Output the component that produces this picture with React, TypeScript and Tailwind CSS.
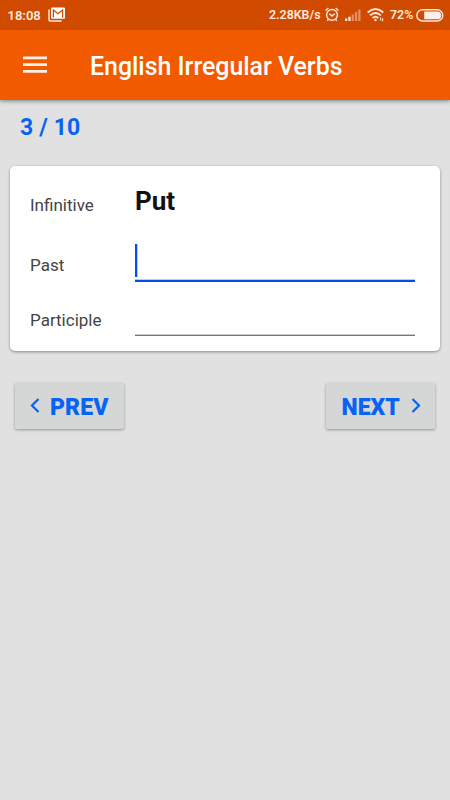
import type { ReactNode } from 'react';

function MailIcon() {
  return (
    <svg width="18" height="16" viewBox="0 0 18 16" fill="none">
      <path d="M1 2.5v10.3q0 1.2 1.2 1.2h11.4" stroke="#ffe9df" strokeWidth="1.5" />
      <rect x="3" y="0.5" width="14" height="11.2" rx="1" fill="#fff" />
      <path d="M5.4 10.5V3L10 6.8 14.6 3v7.5" stroke="#d04a00" strokeWidth="1.2" />
    </svg>
  );
}

function AlarmIcon() {
  return (
    <svg width="14" height="16" viewBox="0 0 14 16" fill="none" stroke="#ffe9df" strokeWidth="1.4">
      <circle cx="7" cy="7.9" r="5.4" />
      <path d="M4.5 6.8 7 9l2.8-2.2M.6 3.5 3.4 1M13.4 3.5 10.6 1M3.4 12.4l-1.2 1.4M10.6 12.4l1.2 1.4" />
    </svg>
  );
}

function SignalIcon() {
  return (
    <svg width="16" height="13" viewBox="0 0 16 13" fill="#ffe9df">
      <path d="M0 9.5h2.2V12H0zM3.3 7.8h2.3V12H3.3z" />
      <path opacity=".45" d="M6.7 5.5h2.2V12H6.7zM10 3h2.2v9H10zM13.3.5h2.2V12h-2.2z" />
    </svg>
  );
}

function WifiIcon() {
  return (
    <svg width="18" height="14" viewBox="0 0 18 14" fill="none" stroke="#ffe9df" strokeWidth="1.9">
      <path d="M.7 4.5q7.8-6.8 15.6 0M3.1 7.4q5.4-4.8 10.8 0M5.6 10q2.9-2.5 5.8 0" />
      <circle cx="8.5" cy="12" r="1.2" fill="#ffe9df" stroke="none" />
      <path d="M13.6 9.6v3M15.6 10.2v3" strokeWidth="1.1" />
    </svg>
  );
}

function BatteryIcon() {
  return (
    <svg width="28" height="13" viewBox="0 0 28 13" fill="none">
      <rect x=".8" y=".8" width="26" height="11.2" rx="5.6" stroke="#ffe9df" strokeWidth="1.4" />
      <path d="M8.2 2.6h13.2a3.8 3.8 0 0 1 0 7.6H8.2z" fill="#ffeee6" />
    </svg>
  );
}

function StatusBar() {
  return (
    <div className="relative z-10 flex h-[30px] items-center bg-[#d04a00] pl-[7.5px] pr-[6px] text-[13px] font-semibold text-[#ffe9df]">
      <span className="mt-px w-[40.5px] whitespace-nowrap">18:08</span>
      <MailIcon />
      <span className="ml-auto mt-px w-[56px] whitespace-nowrap text-[12.4px]">2.28KB/s</span>
      <span className="mr-[6px]"><AlarmIcon /></span>
      <span className="mr-[6px]"><SignalIcon /></span>
      <span className="mr-[5px]"><WifiIcon /></span>
      <span className="mt-px w-[26px] whitespace-nowrap text-[12.4px]">72%</span>
      <BatteryIcon />
    </div>
  );
}

function Row({ label, className, labelClass, children }: { label: string; className: string; labelClass?: string; children: ReactNode }) {
  return (
    <div className={`flex pl-5 pr-[25px] ${className}`}>
      <span className={`w-[105px] text-[17px] leading-5 text-[#444] ${labelClass ?? ''}`}>{label}</span>
      <div className="flex-1">{children}</div>
    </div>
  );
}

export default function App() {
  return (
    <main className="flex h-[800px] w-[450px] flex-col overflow-hidden bg-[#e1e1e1] font-['Roboto',sans-serif]">
      <StatusBar />
      <header className="flex h-[70px] shrink-0 items-center bg-[#f25a00] pl-[23px] shadow-[0_1px_4px_rgba(0,30,40,0.5)]">
        <svg width="24" height="18" viewBox="0 0 24 18" fill="#fff0eb">
          <path d="M0 .6h24v2.7H0zM0 7.3h24V10H0zM0 14h24v2.7H0z" />
        </svg>
        <h1 className="ml-[43px] mt-[3px] whitespace-nowrap text-[24.9px] font-medium leading-8 text-white">English Irregular Verbs</h1>
      </header>

      <div className="mt-[14px] pl-5 text-[23px] font-bold leading-7 tracking-[0.15px] text-[#0763f3]">3 / 10</div>

      <section className="mx-[10px] mt-[24px] h-[185px] rounded-[5px] bg-white shadow-[0_1px_3px_rgba(0,0,0,0.4)]">
        <Row label="Infinitive" className="h-[78px] pt-[29px]">
          <div className="-mt-[10px] text-[26px] font-bold leading-8 text-[#111]">Put</div>
        </Row>
        <Row label="Past" className="h-[38px]" labelClass="pt-[11px]">
          <div className="h-[38px] w-full border-b-[2px] border-[#0050e8] shadow-[inset_0_-1px_0_#b5ccf8]">
            <div className="h-[33px] w-[3px] border-r border-[#b5ccf8] bg-[#0050f0]" />
          </div>
        </Row>
        <Row label="Participle" className="h-[69px]" labelClass="pt-[28px]">
          <div className="h-[54px] w-full border-b border-[#777] shadow-[inset_0_-1px_0_#ccc]" />
        </Row>
      </section>

      <nav className="mx-[15px] mt-[32px] flex justify-between text-[23px] font-black leading-none text-[#0763f3]">
        <button className="flex h-[46px] w-[109px] items-center rounded-[2px] bg-[#d5d7d7] pl-[15px] shadow-[0_1px_3px_rgba(0,0,0,0.35)]">
          <svg width="10" height="16" viewBox="0 0 10 16" fill="none" stroke="currentColor" strokeWidth="2.2">
            <path d="M8.5 1 2 7.5 8.5 14" />
          </svg>
          <span className="ml-[10px] mt-[2px] tracking-[0.1px]">PREV</span>
        </button>
        <button className="flex h-[46px] w-[109px] items-center rounded-[2px] bg-[#d5d7d7] pl-[15.5px] shadow-[0_1px_3px_rgba(0,0,0,0.35)]">
          <span className="mt-[2px] w-[69px] text-left">NEXT</span>
          <svg width="10" height="16" viewBox="0 0 10 16" fill="none" stroke="currentColor" strokeWidth="2.2">
            <path d="M1.5 1 8 7.5 1.5 14" />
          </svg>
        </button>
      </nav>
    </main>
  );
}
